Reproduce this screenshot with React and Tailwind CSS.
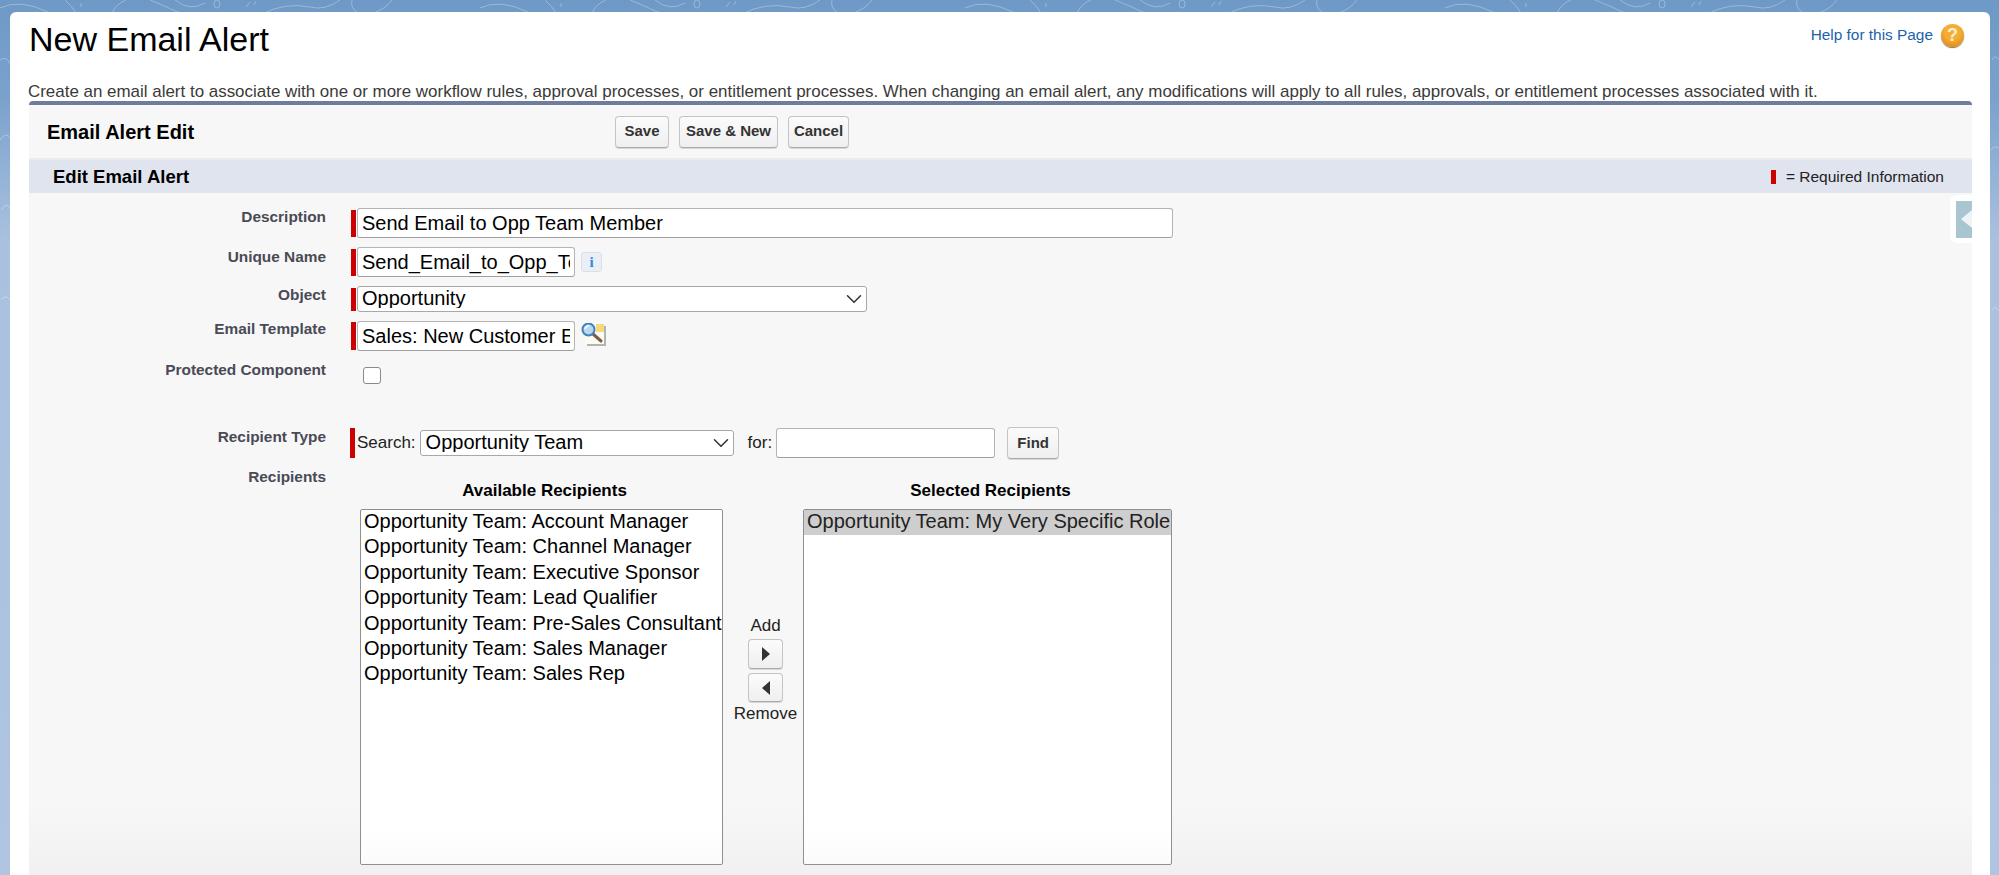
import { ChevronDown } from 'lucide-react'

const AVAILABLE = [
  'Opportunity Team: Account Manager',
  'Opportunity Team: Channel Manager',
  'Opportunity Team: Executive Sponsor',
  'Opportunity Team: Lead Qualifier',
  'Opportunity Team: Pre-Sales Consultant',
  'Opportunity Team: Sales Manager',
  'Opportunity Team: Sales Rep',
]

const inputBase =
  'rounded-[3px] border border-[#b4b4b4] border-b-[#a0a0a0] bg-white px-[4px] text-[20px] text-black outline-none'

function Button({ children, className = '' }) {
  return (
    <button
      type="button"
      className={`rounded-[4px] border border-[#c4c4c4] border-b-[#a9a9a9] bg-gradient-to-b from-[#fbfbfb] to-[#efefef] text-center text-[15px] font-bold text-[#333] shadow-[0_1px_0_#d8d8d8] ${className}`}
    >
      {children}
    </button>
  )
}

function RequiredBar({ className = '' }) {
  return <span className={`w-[5px] shrink-0 bg-[#cc0000] ${className}`} />
}

// one label + control line of the form
function Row({ label, labelClass = '', className = '', children }) {
  return (
    <div className={`flex items-start ${className}`}>
      <div className={`w-[297px] shrink-0 text-right text-[15.4px] leading-[16px] font-bold text-[#4a4a56] ${labelClass}`}>
        {label}
      </div>
      <div className="ml-[25px] flex min-w-0 flex-1 items-center">{children}</div>
    </div>
  )
}

function Select({ value, className = '', textClass = '' }) {
  return (
    <div className={`relative ${className}`}>
      <select
        defaultValue={value}
        className={`h-full w-full appearance-none rounded-[3px] border border-[#a8a8a8] bg-white pb-[2px] text-[20px] leading-[20px] text-black outline-none ${textClass}`}
      >
        <option>{value}</option>
      </select>
      <ChevronDown className="pointer-events-none absolute top-0 right-0 h-[26px] w-[26px] text-[#333]" strokeWidth={1.4} />
    </div>
  )
}

function LookupIcon() {
  return (
    <svg className="ml-[6px] h-[26px] w-[26px] shrink-0" viewBox="0 0 26 26">
      <rect x="6" y="3" width="19" height="20" fill="#8f8f8f" opacity="0.65" />
      <rect x="4" y="1" width="19" height="20" fill="#fbfbf2" />
      <rect x="15" y="1" width="8" height="8" fill="#f6d97c" />
      <path d="M12 11l8 7" stroke="#7d5d42" strokeWidth="3" strokeLinecap="round" />
      <circle cx="7.5" cy="6.5" r="6" fill="#b4d9f0" stroke="#4580b8" strokeWidth="2" />
      <path d="M4 6a4 4 0 0 1 4-3" stroke="#fff" strokeWidth="1.5" fill="none" />
    </svg>
  )
}

function Listbox({ className = '', children }) {
  return (
    <ul
      className={`h-[356px] overflow-hidden rounded-[2px] border border-[#8f8f8f] bg-gradient-to-b from-white from-[90%] to-[#fbfbfb] text-[20px] text-black ${className}`}
    >
      {children}
    </ul>
  )
}

export default function App() {
  return (
    <div className="relative h-[875px] overflow-hidden bg-[linear-gradient(180deg,#6e99c6_0px,#7ba2cd_100px,#a9c1df_240px,#afc5e1_875px)] pt-[12px] pr-[9px] pl-[10px] font-['Liberation_Sans',Arial,sans-serif]">
      {/* faint swirl texture of the page background */}
      <svg className="absolute inset-0 h-full w-full" viewBox="0 0 1999 875" fill="none" stroke="#fff" strokeOpacity="0.3" strokeWidth="1">
        <defs>
          <g id="swirl">
            <path d="M0 8Q20-2 50 13M65 0Q72 6 76 13M81 3V7M112 13Q116 4 126 0M150 0Q165 6 180 13M175 0Q190 12 205 3M246 7L250 2M254 5L256 1M262 14Q285 2 310 7Q325 11 340 0M352 0Q350 8 358 13M370 14Q385 10 392 0" />
            <ellipse cx="217" cy="4" rx="3" ry="4" />
          </g>
        </defs>
        <use href="#swirl" />
        <use href="#swirl" x="480" />
        <use href="#swirl" x="965" />
        <use href="#swirl" x="1445" />
        <path d="M0 60c6-4 8 0 10 4M0 140c4-6 8-6 10-2M2 210c2-6 6-6 8-2M1 300c3-4 6-4 9 0M1992 60c2-4 5-4 7 0M1991 150c3-4 6-4 8-1M1992 310c2-3 5-3 7 1" />
      </svg>

      <div className="relative flex h-full flex-col rounded-t-[6px] bg-white px-[19px] pr-[18px]">
        <div className="flex items-start justify-between">
          <h1 className="mt-[8px] text-[34px] leading-[38px] font-normal text-black">New Email Alert</h1>
          <div className="mt-[8px] flex items-center gap-[8px] pr-[8px]">
            <a className="text-[15.4px] leading-[30px] text-[#1b62ad]">Help for this Page</a>
            <span className="flex h-[23px] w-[23px] items-center justify-center rounded-full bg-[radial-gradient(circle_at_50%_35%,#f5ad35_40%,#d67c0e)] text-[18px] leading-none font-bold text-[#fdeccf] shadow-[0_1px_1px_#8a7a60]">
              ?
            </span>
          </div>
        </div>
        <p className="mt-[25px] -ml-[1px] whitespace-nowrap text-[16.95px] leading-[18px] text-[#3a3a3a]">
          Create an email alert to associate with one or more workflow rules, approval processes, or entitlement processes. When changing an email alert, any modifications will apply to all rules, approvals, or entitlement processes associated with it.
        </p>

        <section className="relative flex flex-1 flex-col rounded-t-[4px] border-t-[4px] border-[#6f7d9c] bg-[linear-gradient(180deg,#f7f7f7_0px,#f7f7f7_700px,#f0f0f0_774px)]">
          <div className="flex h-[55px] items-center border-b-2 border-[#ebebeb]">
            <h2 className="ml-[18px] w-[568px] text-[20px] font-bold text-black">Email Alert Edit</h2>
            <div className="flex gap-[10px]">
              <Button className="h-[32px] w-[54px]">Save</Button>
              <Button className="h-[32px] w-[99px]">Save &amp; New</Button>
              <Button className="h-[32px] w-[61px]">Cancel</Button>
            </div>
          </div>

          <div className="flex h-[33px] items-center justify-between bg-[#e0e4ee]">
            <h3 className="ml-[24px] text-[18.5px] font-bold text-black">Edit Email Alert</h3>
            <div className="mr-[28px] flex items-center gap-[10px] text-[15.5px] text-[#222]">
              <RequiredBar className="h-[14px]" />
              <span>= Required Information</span>
            </div>
          </div>

          {/* collapse handle for the sidebar */}
          <div className="absolute top-[90px] right-0 flex h-[48px] w-[22px] items-center justify-end rounded-l-[7px] bg-white">
            <div className="flex h-[37px] w-[16px] items-center justify-end bg-[#a9c5d0]">
              <span className="h-0 w-0 border-y-[9px] border-r-[11px] border-y-transparent border-r-[#eef3f5]" />
            </div>
          </div>

          <Row label="Description" labelClass="pt-[1px]" className="mt-[15px] h-[30px]">
            <RequiredBar className="h-[27px]" />
            <input readOnly defaultValue="Send Email to Opp Team Member" className={`${inputBase} ml-[1px] h-[30px] w-[816px]`} />
          </Row>
          <Row label="Unique Name" labelClass="pt-[2px]" className="mt-[9px] h-[30px]">
            <RequiredBar className="h-[27px]" />
            <input readOnly defaultValue="Send_Email_to_Opp_Team_Member" className={`${inputBase} ml-[1px] h-[30px] w-[218px]`} />
            <span className="ml-[6px] flex h-[20px] w-[21px] items-center justify-center rounded-[3px] border border-[#dcdfe4] bg-[#e9eff7] font-['Liberation_Serif',serif] text-[15px] leading-none font-bold text-[#3c86dc]">
              i
            </span>
          </Row>
          <Row label="Object" labelClass="pt-[1px]" className="mt-[9px] h-[26px]">
            <RequiredBar className="h-[23px]" />
            <Select value="Opportunity" className="ml-[1px] h-[26px] w-[510px]" textClass="pl-[4px]" />
          </Row>
          <Row label="Email Template" className="mt-[9px] h-[30px]">
            <RequiredBar className="h-[28px]" />
            <input readOnly defaultValue="Sales: New Customer Email" className={`${inputBase} ml-[1px] h-[30px] w-[218px]`} />
            <LookupIcon />
          </Row>
          <Row label="Protected Component" labelClass="-mt-[5px]" className="mt-[16px] h-[17px]">
            <span className="ml-[12px] h-[17px] w-[18px] rounded-[3px] border-[1.5px] border-[#8a8a8a] bg-white" />
          </Row>
          <Row label="Recipient Type" labelClass="pt-[2px]" className="mt-[43px] h-[32px]">
            <RequiredBar className="-ml-[1px] h-[30px]" />
            <span className="ml-[2px] text-[17px] text-[#222]">Search:</span>
            <Select value="Opportunity Team" className="ml-[4px] h-[26px] w-[314px]" textClass="pl-[5px]" />
            <span className="ml-[14px] text-[17px] text-[#222]">for:</span>
            <input readOnly className={`${inputBase} ml-[4px] h-[30px] w-[219px]`} />
            <Button className="ml-[12px] h-[32px] w-[52px]">Find</Button>
          </Row>

          <Row label="Recipients" labelClass="-mt-[14px]" className="mt-[24px]">
            <div className="flex items-start pl-[9px]">
              <div className="flex w-[363px] flex-col">
                <h4 className="pl-[6px] text-center text-[17px] leading-[16px] font-bold text-black">Available Recipients</h4>
                <Listbox className="mt-[10px] pl-[3px]">
                  {AVAILABLE.map((name) => (
                    <li key={name} className="h-[25.4px] whitespace-nowrap leading-[23px]">{name}</li>
                  ))}
                </Listbox>
              </div>
              <div className="flex w-[80px] flex-col items-center pt-[134px] pl-[5px] text-[17px] leading-[18px] text-[#222]">
                <span>Add</span>
                <Button className="mt-[4px] flex h-[30px] w-[35px] items-center justify-center">
                  <span className="h-0 w-0 border-y-[7px] border-l-[8px] border-y-transparent border-l-[#333]" />
                </Button>
                <Button className="mt-[4px] flex h-[29px] w-[35px] items-center justify-center">
                  <span className="h-0 w-0 border-y-[7px] border-r-[8px] border-y-transparent border-r-[#333]" />
                </Button>
                <span className="mt-[3px]">Remove</span>
              </div>
              <div className="flex w-[369px] flex-col">
                <h4 className="pl-[6px] text-center text-[17px] leading-[16px] font-bold text-black">Selected Recipients</h4>
                <Listbox className="mt-[10px]">
                  <li className="h-[25.4px] whitespace-nowrap bg-[#cecece] pl-[3px] leading-[23px] text-[#222]">Opportunity Team: My Very Specific Role</li>
                </Listbox>
              </div>
            </div>
          </Row>
        </section>
      </div>
    </div>
  )
}
